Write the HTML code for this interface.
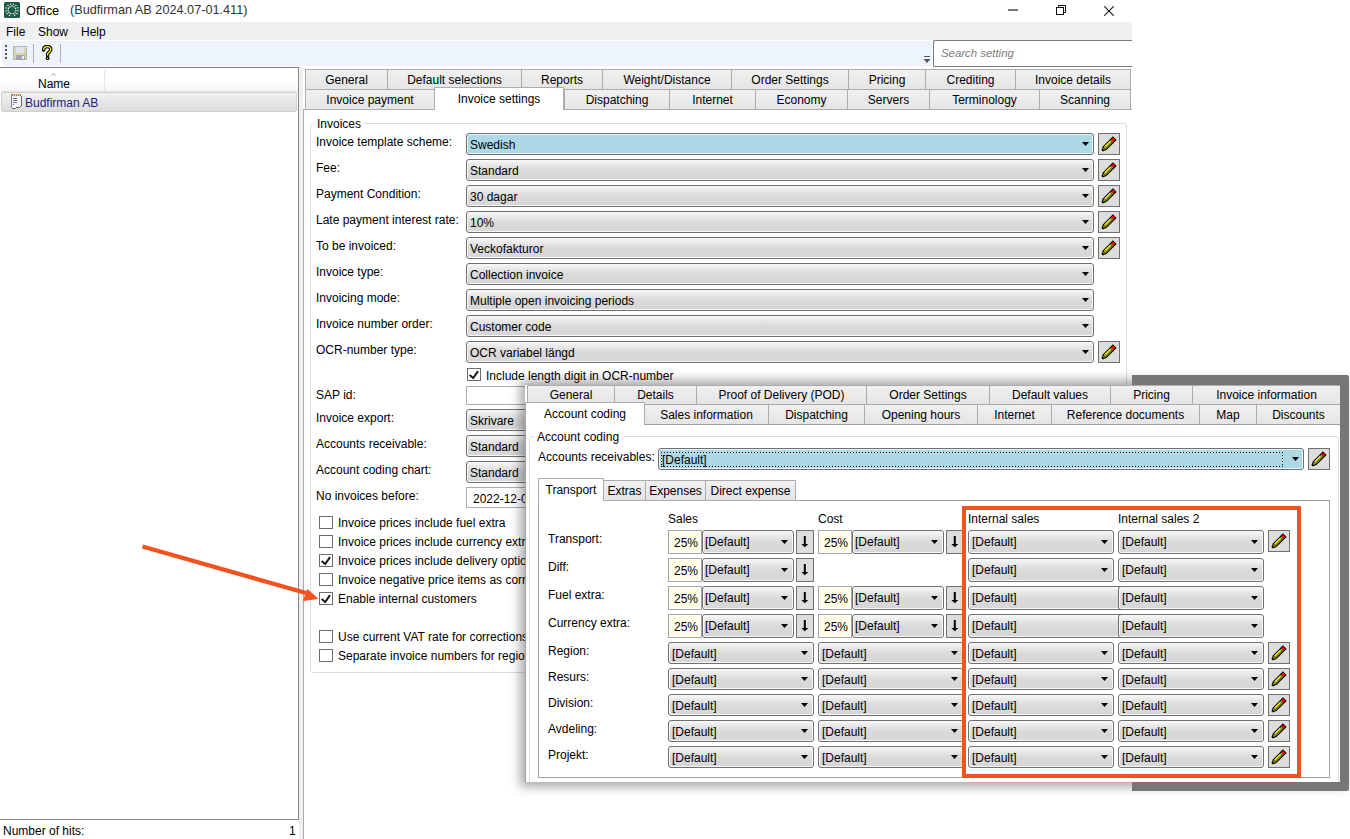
<!DOCTYPE html>
<html><head><meta charset="utf-8"><style>
*{margin:0;padding:0;box-sizing:border-box}
html,body{width:1350px;height:839px;overflow:hidden;background:#fff}
body{position:relative;font-family:"Liberation Sans",sans-serif;font-size:12px;color:#000}
div,svg{position:absolute}
.t{white-space:nowrap;line-height:15px;font-size:12px}
.cb{border:1px solid #707070;border-radius:3px;background:linear-gradient(#f8f8f8,#e4e4e4 30%,#d9d9d9 55%,#d7d7d7);box-shadow:inset 0 0 0 1px #f7f7f7}
.cb.blue{background:#add8e6;box-shadow:inset 0 0 0 1px #e8f4f8}
.pb{border:1px solid #707070;background:#dddddd}
.pct{border:1px solid #a5a5a5;background:#fffde6;box-shadow:inset 0 0 0 1px #fff}
.ck{width:14px;height:13px;border:1px solid #6d6d6d;background:#fff}
.tab{border:1px solid #acacac;background:linear-gradient(#f0f0f0,#e5e5e5)}
.tab.sel{background:#fff;border-bottom:none}
.gb{border:1px solid #d5dfe5;border-radius:3px}
</style></head>
<body>
<svg style="left:4px;top:2px" width="16" height="16" viewBox="0 0 16 16"><path d="M1 0H15L16 1V15L15 16H1L0 15V1Z" fill="#1f5c48"/><ellipse cx="6.67" cy="11.66" rx="1.0" ry="0.55" transform="rotate(170 6.67 11.66)" fill="#f2f6f2"/><ellipse cx="4.93" cy="10.40" rx="1.0" ry="0.55" transform="rotate(202 4.93 10.40)" fill="#f2f6f2"/><ellipse cx="4.12" cy="8.41" rx="1.0" ry="0.55" transform="rotate(234 4.12 8.41)" fill="#f2f6f2"/><ellipse cx="4.49" cy="6.29" rx="1.0" ry="0.55" transform="rotate(266 4.49 6.29)" fill="#f2f6f2"/><ellipse cx="5.93" cy="4.69" rx="1.0" ry="0.55" transform="rotate(298 5.93 4.69)" fill="#f2f6f2"/><ellipse cx="8.00" cy="4.10" rx="1.0" ry="0.55" transform="rotate(330 8.00 4.10)" fill="#f2f6f2"/><ellipse cx="10.07" cy="4.69" rx="1.0" ry="0.55" transform="rotate(362 10.07 4.69)" fill="#f2f6f2"/><ellipse cx="11.51" cy="6.29" rx="1.0" ry="0.55" transform="rotate(394 11.51 6.29)" fill="#f2f6f2"/><ellipse cx="11.88" cy="8.41" rx="1.0" ry="0.55" transform="rotate(426 11.88 8.41)" fill="#f2f6f2"/><ellipse cx="11.07" cy="10.40" rx="1.0" ry="0.55" transform="rotate(458 11.07 10.40)" fill="#f2f6f2"/><ellipse cx="9.33" cy="11.66" rx="1.0" ry="0.55" transform="rotate(490 9.33 11.66)" fill="#f2f6f2"/><circle cx="5.46" cy="13.44" r="0.75" fill="#e8f0ea"/><circle cx="3.21" cy="11.61" r="0.75" fill="#e8f0ea"/><circle cx="2.07" cy="8.94" r="0.75" fill="#e8f0ea"/><circle cx="2.33" cy="6.05" r="0.75" fill="#e8f0ea"/><circle cx="3.91" cy="3.61" r="0.75" fill="#e8f0ea"/><circle cx="6.45" cy="2.20" r="0.75" fill="#e8f0ea"/><circle cx="9.35" cy="2.15" r="0.75" fill="#e8f0ea"/><circle cx="11.94" cy="3.47" r="0.75" fill="#e8f0ea"/><circle cx="13.60" cy="5.85" r="0.75" fill="#e8f0ea"/><circle cx="13.96" cy="8.73" r="0.75" fill="#e8f0ea"/><circle cx="12.91" cy="11.44" r="0.75" fill="#e8f0ea"/><circle cx="10.72" cy="13.35" r="0.75" fill="#e8f0ea"/></svg>
<div class="t" style="left:26px;top:3px;font-size:12.8px">Office</div>
<div class="t" style="left:70px;top:3px;color:#333;font-size:12.7px">(Budfirman AB 2024.07-01.411)</div>
<div style="left:1008px;top:9px;width:10px;height:2px;background:#777"></div>
<svg style="left:1055px;top:4px" width="12" height="12"><rect x="1.5" y="3.5" width="7" height="7" fill="none" stroke="#111"/><path d="M3.5 3.5V1.5H10.5V8.5H8.5" fill="none" stroke="#111"/></svg>
<svg style="left:1104px;top:6px" width="10" height="10"><path d="M0.3 0.3L9.7 9.7M9.7 0.3L0.3 9.7" stroke="#111" stroke-width="1.05"/></svg>
<div style="left:0px;top:22px;width:1132px;height:18px;background:#f0f0f0"></div>
<div class="t" style="left:6px;top:25px;">File</div>
<div class="t" style="left:38px;top:25px;">Show</div>
<div class="t" style="left:81px;top:25px;">Help</div>
<div style="left:0px;top:40px;width:1132px;height:27px;background:#fff"></div>
<div style="left:2px;top:41px;width:930px;height:25px;background:#eef4fc;border-radius:3px"></div>
<div style="left:5px;top:45px;width:2px;height:2px;background:#555"></div>
<div style="left:5px;top:49px;width:2px;height:2px;background:#555"></div>
<div style="left:5px;top:53px;width:2px;height:2px;background:#555"></div>
<div style="left:5px;top:57px;width:2px;height:2px;background:#555"></div>
<svg style="left:13px;top:46px" width="14" height="14" viewBox="0 0 14 14"><rect x="0" y="0" width="14" height="14" fill="#b4b4b4"/><rect x="1" y="1" width="12" height="12" fill="#d6d6a8"/><rect x="3" y="1" width="8" height="6" fill="#e2e5ec"/><rect x="3" y="9" width="9" height="5" fill="#a4a6ae"/><rect x="9" y="10" width="2" height="3" fill="#eef0f4"/><rect x="12" y="1" width="1" height="1" fill="#fff"/></svg>
<div style="left:33px;top:44px;width:1px;height:19px;background:#b0b0b0"></div>
<svg style="left:41px;top:45px" width="13" height="16" viewBox="0 0 13 16"><path d="M2.6 5 C2.6 2.6 4.2 1.6 6.3 1.6 C8.6 1.6 9.8 2.9 9.8 4.6 C9.8 6.6 7.4 7.2 6.6 8.8 L6.6 10.4" fill="none" stroke="#000" stroke-width="3.4" stroke-linecap="round"/><circle cx="6.6" cy="13.2" r="1.9" fill="#000"/><path d="M2.6 5 C2.6 2.6 4.2 1.6 6.3 1.6 C8.6 1.6 9.8 2.9 9.8 4.6 C9.8 6.6 7.4 7.2 6.6 8.8 L6.6 10.4" fill="none" stroke="#ff0" stroke-width="1.3"/><circle cx="6.6" cy="13.2" r="0.8" fill="#ff0"/></svg>
<div style="left:60px;top:44px;width:1px;height:19px;background:#b0b0b0"></div>
<svg style="left:923px;top:56px" width="8" height="8"><rect x="1" y="0" width="6" height="1" fill="#555"/><path d="M0.5 3H7.5L4 7Z" fill="#555"/></svg>
<div style="left:933px;top:40px;width:199px;height:27px;background:#fff;border:1px solid #7a7a7a;border-right:none;border-radius:2px 0 0 2px"></div>
<div class="t" style="left:941px;top:46px;font-style:italic;color:#7d7d7d;font-size:11.4px">Search setting</div>
<div style="left:0px;top:67px;width:299px;height:753px;background:#fff;border-top:1px solid #7a7a7a;border-right:1px solid #828790;border-bottom:1px solid #828790"></div>
<div style="left:1px;top:68px;width:297px;height:23px;background:linear-gradient(#fff,#fff 50%,#f4f5f7)"></div>
<div style="left:104px;top:70px;width:1px;height:21px;background:#e5e5e5"></div>
<div style="left:1px;top:91px;width:297px;height:1px;background:#e2e2e2"></div>
<div class="t" style="left:38px;top:77px;">Name</div>
<svg style="left:51px;top:73px" width="5" height="3"><path d="M0.5 2.5L2.5 0.5L4.5 2.5" stroke="#999" fill="none"/></svg>
<div style="left:1px;top:92px;width:296px;height:20px;background:linear-gradient(#f1f1f1,#dcdcdc);border:1px solid #d0d0d0;border-radius:2px"></div>
<svg style="left:10px;top:93px" width="13" height="17" viewBox="0 0 13 17" shape-rendering="crispEdges"><rect x="1" y="2" width="10" height="13" fill="#f3f5f8"/><rect x="1" y="2" width="1" height="13" fill="#7a78c8"/><rect x="11" y="3" width="1" height="10" fill="#6a6a6a"/><rect x="10" y="13" width="1" height="1" fill="#6a6a6a"/><rect x="6" y="14" width="4" height="1" fill="#6a6a6a"/><rect x="2" y="15" width="4" height="1" fill="#6a6a6a"/><rect x="1" y="1" width="10" height="1" fill="#c8a848"/><rect x="2" y="2" width="1" height="1" fill="#8a6a30"/><rect x="4" y="2" width="1" height="1" fill="#8a6a30"/><rect x="6" y="2" width="1" height="1" fill="#8a6a30"/><rect x="8" y="2" width="1" height="1" fill="#8a6a30"/><rect x="10" y="2" width="1" height="1" fill="#8a6a30"/><rect x="3" y="5" width="4" height="1" fill="#707880"/><rect x="3" y="7" width="4" height="1" fill="#707880"/><rect x="3" y="9" width="4" height="1" fill="#707880"/><rect x="3" y="11" width="1" height="1" fill="#707880"/></svg>
<div class="t" style="left:25px;top:96px;color:#1a237e">Budfirman AB</div>
<div class="t" style="left:3px;top:824px;">Number of hits:</div>
<div class="t" style="left:289px;top:824px;">1</div>
<div style="left:299px;top:67px;width:4px;height:772px;background:#f0f0f0"></div>
<div style="left:303px;top:109px;width:829px;height:740px;background:#fff;border-left:1px solid #acacac"></div>
<div class="tab" style="left:305px;top:69px;width:83px;height:21px;"><div class="t" style="left:0;width:100%;text-align:center;top:3px">General</div></div>
<div class="tab" style="left:387px;top:69px;width:135px;height:21px;"><div class="t" style="left:0;width:100%;text-align:center;top:3px">Default selections</div></div>
<div class="tab" style="left:521px;top:69px;width:82px;height:21px;"><div class="t" style="left:0;width:100%;text-align:center;top:3px">Reports</div></div>
<div class="tab" style="left:602px;top:69px;width:130px;height:21px;"><div class="t" style="left:0;width:100%;text-align:center;top:3px">Weight/Distance</div></div>
<div class="tab" style="left:731px;top:69px;width:118px;height:21px;"><div class="t" style="left:0;width:100%;text-align:center;top:3px">Order Settings</div></div>
<div class="tab" style="left:848px;top:69px;width:78px;height:21px;"><div class="t" style="left:0;width:100%;text-align:center;top:3px">Pricing</div></div>
<div class="tab" style="left:925px;top:69px;width:91px;height:21px;"><div class="t" style="left:0;width:100%;text-align:center;top:3px">Crediting</div></div>
<div class="tab" style="left:1015px;top:69px;width:116px;height:21px;"><div class="t" style="left:0;width:100%;text-align:center;top:3px">Invoice details</div></div>
<div class="tab" style="left:305px;top:89px;width:130px;height:21px;"><div class="t" style="left:0;width:100%;text-align:center;top:3px">Invoice payment</div></div>
<div class="tab" style="left:564px;top:89px;width:106px;height:21px;"><div class="t" style="left:0;width:100%;text-align:center;top:3px">Dispatching</div></div>
<div class="tab" style="left:669px;top:89px;width:87px;height:21px;"><div class="t" style="left:0;width:100%;text-align:center;top:3px">Internet</div></div>
<div class="tab" style="left:755px;top:89px;width:93px;height:21px;"><div class="t" style="left:0;width:100%;text-align:center;top:3px">Economy</div></div>
<div class="tab" style="left:847px;top:89px;width:83px;height:21px;"><div class="t" style="left:0;width:100%;text-align:center;top:3px">Servers</div></div>
<div class="tab" style="left:929px;top:89px;width:111px;height:21px;"><div class="t" style="left:0;width:100%;text-align:center;top:3px">Terminology</div></div>
<div class="tab" style="left:1039px;top:89px;width:92px;height:21px;"><div class="t" style="left:0;width:100%;text-align:center;top:3px">Scanning</div></div>
<div style="left:303px;top:109px;width:829px;height:1px;background:#acacac"></div>
<div class="tab sel" style="left:434px;top:87px;width:130px;height:23px;"><div class="t" style="left:0;width:100%;text-align:center;top:4px">Invoice settings</div></div>
<div class="gb" style="left:310px;top:123px;width:817px;height:550px"></div>
<div style="left:314px;top:118px;width:50px;height:10px;background:#fff"></div>
<div class="t" style="left:317px;top:117px;">Invoices</div>
<div class="t" style="left:316px;top:135px;">Invoice template scheme:</div>
<div class="cb blue" style="left:466px;top:133px;width:628px;height:22px"><div class="t" style="left:3px;top:4px">Swedish</div><svg style="position:absolute;left:615px;top:8px" width="7" height="4" viewBox="0 0 7 4"><path d="M0 0H7L3.5 4Z" fill="#000"/></svg></div>
<div class="pb" style="left:1098px;top:133px;width:22px;height:22px"><svg width="22" height="22" viewBox="0 0 22 22" style="position:absolute;left:-1px;top:-1px">
<g transform="translate(-0.3 0.2) rotate(-45 11 11)">
<path d="M1.8 10.0 L5.6 8.4 L19.6 8.4 L19.6 13.6 L5.6 13.6 L1.8 12.0 Z" fill="#000"/>
<path d="M3.2 10.5 L6.2 9.4 L6.2 12.6 L3.2 11.5 Z" fill="#8c8c00"/>
<rect x="6.2" y="9.4" width="8.4" height="1.4" fill="#ffff00"/>
<rect x="6.2" y="10.8" width="8.4" height="0.7" fill="#b8b8c8"/>
<rect x="6.2" y="11.5" width="8.4" height="1.1" fill="#8c8c00"/>
<rect x="14.6" y="9.4" width="1.8" height="3.2" fill="#8c8c00"/>
<rect x="16.4" y="9.4" width="2.4" height="3.2" fill="#ff0000"/>
</g></svg></div>
<div class="t" style="left:316px;top:161px;">Fee:</div>
<div class="cb" style="left:466px;top:159px;width:628px;height:22px"><div class="t" style="left:3px;top:4px">Standard</div><svg style="position:absolute;left:615px;top:8px" width="7" height="4" viewBox="0 0 7 4"><path d="M0 0H7L3.5 4Z" fill="#000"/></svg></div>
<div class="pb" style="left:1098px;top:159px;width:22px;height:22px"><svg width="22" height="22" viewBox="0 0 22 22" style="position:absolute;left:-1px;top:-1px">
<g transform="translate(-0.3 0.2) rotate(-45 11 11)">
<path d="M1.8 10.0 L5.6 8.4 L19.6 8.4 L19.6 13.6 L5.6 13.6 L1.8 12.0 Z" fill="#000"/>
<path d="M3.2 10.5 L6.2 9.4 L6.2 12.6 L3.2 11.5 Z" fill="#8c8c00"/>
<rect x="6.2" y="9.4" width="8.4" height="1.4" fill="#ffff00"/>
<rect x="6.2" y="10.8" width="8.4" height="0.7" fill="#b8b8c8"/>
<rect x="6.2" y="11.5" width="8.4" height="1.1" fill="#8c8c00"/>
<rect x="14.6" y="9.4" width="1.8" height="3.2" fill="#8c8c00"/>
<rect x="16.4" y="9.4" width="2.4" height="3.2" fill="#ff0000"/>
</g></svg></div>
<div class="t" style="left:316px;top:187px;">Payment Condition:</div>
<div class="cb" style="left:466px;top:185px;width:628px;height:22px"><div class="t" style="left:3px;top:4px">30 dagar</div><svg style="position:absolute;left:615px;top:8px" width="7" height="4" viewBox="0 0 7 4"><path d="M0 0H7L3.5 4Z" fill="#000"/></svg></div>
<div class="pb" style="left:1098px;top:185px;width:22px;height:22px"><svg width="22" height="22" viewBox="0 0 22 22" style="position:absolute;left:-1px;top:-1px">
<g transform="translate(-0.3 0.2) rotate(-45 11 11)">
<path d="M1.8 10.0 L5.6 8.4 L19.6 8.4 L19.6 13.6 L5.6 13.6 L1.8 12.0 Z" fill="#000"/>
<path d="M3.2 10.5 L6.2 9.4 L6.2 12.6 L3.2 11.5 Z" fill="#8c8c00"/>
<rect x="6.2" y="9.4" width="8.4" height="1.4" fill="#ffff00"/>
<rect x="6.2" y="10.8" width="8.4" height="0.7" fill="#b8b8c8"/>
<rect x="6.2" y="11.5" width="8.4" height="1.1" fill="#8c8c00"/>
<rect x="14.6" y="9.4" width="1.8" height="3.2" fill="#8c8c00"/>
<rect x="16.4" y="9.4" width="2.4" height="3.2" fill="#ff0000"/>
</g></svg></div>
<div class="t" style="left:316px;top:213px;">Late payment interest rate:</div>
<div class="cb" style="left:466px;top:211px;width:628px;height:22px"><div class="t" style="left:3px;top:4px">10%</div><svg style="position:absolute;left:615px;top:8px" width="7" height="4" viewBox="0 0 7 4"><path d="M0 0H7L3.5 4Z" fill="#000"/></svg></div>
<div class="pb" style="left:1098px;top:211px;width:22px;height:22px"><svg width="22" height="22" viewBox="0 0 22 22" style="position:absolute;left:-1px;top:-1px">
<g transform="translate(-0.3 0.2) rotate(-45 11 11)">
<path d="M1.8 10.0 L5.6 8.4 L19.6 8.4 L19.6 13.6 L5.6 13.6 L1.8 12.0 Z" fill="#000"/>
<path d="M3.2 10.5 L6.2 9.4 L6.2 12.6 L3.2 11.5 Z" fill="#8c8c00"/>
<rect x="6.2" y="9.4" width="8.4" height="1.4" fill="#ffff00"/>
<rect x="6.2" y="10.8" width="8.4" height="0.7" fill="#b8b8c8"/>
<rect x="6.2" y="11.5" width="8.4" height="1.1" fill="#8c8c00"/>
<rect x="14.6" y="9.4" width="1.8" height="3.2" fill="#8c8c00"/>
<rect x="16.4" y="9.4" width="2.4" height="3.2" fill="#ff0000"/>
</g></svg></div>
<div class="t" style="left:316px;top:239px;">To be invoiced:</div>
<div class="cb" style="left:466px;top:237px;width:628px;height:22px"><div class="t" style="left:3px;top:4px">Veckofakturor</div><svg style="position:absolute;left:615px;top:8px" width="7" height="4" viewBox="0 0 7 4"><path d="M0 0H7L3.5 4Z" fill="#000"/></svg></div>
<div class="pb" style="left:1098px;top:237px;width:22px;height:22px"><svg width="22" height="22" viewBox="0 0 22 22" style="position:absolute;left:-1px;top:-1px">
<g transform="translate(-0.3 0.2) rotate(-45 11 11)">
<path d="M1.8 10.0 L5.6 8.4 L19.6 8.4 L19.6 13.6 L5.6 13.6 L1.8 12.0 Z" fill="#000"/>
<path d="M3.2 10.5 L6.2 9.4 L6.2 12.6 L3.2 11.5 Z" fill="#8c8c00"/>
<rect x="6.2" y="9.4" width="8.4" height="1.4" fill="#ffff00"/>
<rect x="6.2" y="10.8" width="8.4" height="0.7" fill="#b8b8c8"/>
<rect x="6.2" y="11.5" width="8.4" height="1.1" fill="#8c8c00"/>
<rect x="14.6" y="9.4" width="1.8" height="3.2" fill="#8c8c00"/>
<rect x="16.4" y="9.4" width="2.4" height="3.2" fill="#ff0000"/>
</g></svg></div>
<div class="t" style="left:316px;top:265px;">Invoice type:</div>
<div class="cb" style="left:466px;top:263px;width:628px;height:22px"><div class="t" style="left:3px;top:4px">Collection invoice</div><svg style="position:absolute;left:615px;top:8px" width="7" height="4" viewBox="0 0 7 4"><path d="M0 0H7L3.5 4Z" fill="#000"/></svg></div>
<div class="t" style="left:316px;top:291px;">Invoicing mode:</div>
<div class="cb" style="left:466px;top:289px;width:628px;height:22px"><div class="t" style="left:3px;top:4px">Multiple open invoicing periods</div><svg style="position:absolute;left:615px;top:8px" width="7" height="4" viewBox="0 0 7 4"><path d="M0 0H7L3.5 4Z" fill="#000"/></svg></div>
<div class="t" style="left:316px;top:317px;">Invoice number order:</div>
<div class="cb" style="left:466px;top:315px;width:628px;height:22px"><div class="t" style="left:3px;top:4px">Customer code</div><svg style="position:absolute;left:615px;top:8px" width="7" height="4" viewBox="0 0 7 4"><path d="M0 0H7L3.5 4Z" fill="#000"/></svg></div>
<div class="t" style="left:316px;top:343px;">OCR-number type:</div>
<div class="cb" style="left:466px;top:341px;width:628px;height:22px"><div class="t" style="left:3px;top:4px">OCR variabel längd</div><svg style="position:absolute;left:615px;top:8px" width="7" height="4" viewBox="0 0 7 4"><path d="M0 0H7L3.5 4Z" fill="#000"/></svg></div>
<div class="pb" style="left:1098px;top:341px;width:22px;height:22px"><svg width="22" height="22" viewBox="0 0 22 22" style="position:absolute;left:-1px;top:-1px">
<g transform="translate(-0.3 0.2) rotate(-45 11 11)">
<path d="M1.8 10.0 L5.6 8.4 L19.6 8.4 L19.6 13.6 L5.6 13.6 L1.8 12.0 Z" fill="#000"/>
<path d="M3.2 10.5 L6.2 9.4 L6.2 12.6 L3.2 11.5 Z" fill="#8c8c00"/>
<rect x="6.2" y="9.4" width="8.4" height="1.4" fill="#ffff00"/>
<rect x="6.2" y="10.8" width="8.4" height="0.7" fill="#b8b8c8"/>
<rect x="6.2" y="11.5" width="8.4" height="1.1" fill="#8c8c00"/>
<rect x="14.6" y="9.4" width="1.8" height="3.2" fill="#8c8c00"/>
<rect x="16.4" y="9.4" width="2.4" height="3.2" fill="#ff0000"/>
</g></svg></div>
<div class="ck" style="left:467px;top:368px"><svg width="13" height="13" style="position:absolute;left:-1px;top:-1px"><path d="M2.6 6.9 L6.2 10 L11 3.1" stroke="#1a1a1a" stroke-width="2" fill="none" stroke-linejoin="miter"/></svg></div>
<div class="t" style="left:486px;top:369px;">Include length digit in OCR-number</div>
<div class="t" style="left:316px;top:388px;">SAP id:</div>
<div class="t" style="left:316px;top:411px;">Invoice export:</div>
<div class="t" style="left:316px;top:437px;">Accounts receivable:</div>
<div class="t" style="left:316px;top:463px;">Account coding chart:</div>
<div class="t" style="left:316px;top:489px;">No invoices before:</div>
<div style="left:466px;top:386px;width:100px;height:19px;background:#fff;border:1px solid #abadb3"></div>
<div class="cb" style="left:466px;top:409px;width:628px;height:22px"><div class="t" style="left:3px;top:4px">Skrivare</div><svg style="position:absolute;left:615px;top:8px" width="7" height="4" viewBox="0 0 7 4"><path d="M0 0H7L3.5 4Z" fill="#000"/></svg></div>
<div class="cb" style="left:466px;top:435px;width:628px;height:22px"><div class="t" style="left:3px;top:4px">Standard</div><svg style="position:absolute;left:615px;top:8px" width="7" height="4" viewBox="0 0 7 4"><path d="M0 0H7L3.5 4Z" fill="#000"/></svg></div>
<div class="cb" style="left:466px;top:461px;width:628px;height:22px"><div class="t" style="left:3px;top:4px">Standard</div><svg style="position:absolute;left:615px;top:8px" width="7" height="4" viewBox="0 0 7 4"><path d="M0 0H7L3.5 4Z" fill="#000"/></svg></div>
<div style="left:466px;top:487px;width:100px;height:21px;background:#fff;border:1px solid #abadb3"></div>
<div class="t" style="left:473px;top:492px;">2022-12-01</div>
<div class="ck" style="left:319px;top:516px"></div>
<div class="t" style="left:338px;top:516px;">Invoice prices include fuel extra</div>
<div class="ck" style="left:319px;top:535px"></div>
<div class="t" style="left:338px;top:535px;">Invoice prices include currency extra</div>
<div class="ck" style="left:319px;top:554px"><svg width="13" height="13" style="position:absolute;left:-1px;top:-1px"><path d="M2.6 6.9 L6.2 10 L11 3.1" stroke="#1a1a1a" stroke-width="2" fill="none" stroke-linejoin="miter"/></svg></div>
<div class="t" style="left:338px;top:554px;">Invoice prices include delivery options</div>
<div class="ck" style="left:319px;top:573px"></div>
<div class="t" style="left:338px;top:573px;">Invoice negative price items as corrections</div>
<div class="ck" style="left:319px;top:592px"><svg width="13" height="13" style="position:absolute;left:-1px;top:-1px"><path d="M2.6 6.9 L6.2 10 L11 3.1" stroke="#1a1a1a" stroke-width="2" fill="none" stroke-linejoin="miter"/></svg></div>
<div class="t" style="left:338px;top:592px;">Enable internal customers</div>
<div class="ck" style="left:319px;top:630px"></div>
<div class="t" style="left:338px;top:630px;">Use current VAT rate for corrections</div>
<div class="ck" style="left:319px;top:649px"></div>
<div class="t" style="left:338px;top:649px;">Separate invoice numbers for regions</div>
<svg style="left:130px;top:530px" width="200" height="80" viewBox="130 530 200 80"><path d="M142.5 546.5 L306 593" stroke="#f4511e" stroke-width="4.4"/><path d="M317.5 598.5 L303.5 600.5 L307.5 589.5 Z" fill="#f4511e" stroke="#f4511e" stroke-width="1"/></svg>
<div style="left:525px;top:385px;width:815px;height:397px;box-shadow:0 0 10px 5px rgba(0,0,0,0.33)"></div>
<div style="left:1132px;top:375px;width:217px;height:416px;background:#777;border-radius:0 2px 2px 0"></div>
<div style="left:0;top:0;width:1350px;height:839px;clip-path:inset(385px 10px 57px 525px)">
<div style="left:525px;top:385px;width:815px;height:397px;background:#fff"></div>
<div style="left:525px;top:424px;width:1px;height:358px;background:#a0a0a0"></div>
<div class="tab" style="left:527px;top:385px;width:88px;height:20px;"><div class="t" style="left:0;width:100%;text-align:center;top:2px">General</div></div>
<div class="tab" style="left:614px;top:385px;width:83px;height:20px;"><div class="t" style="left:0;width:100%;text-align:center;top:2px">Details</div></div>
<div class="tab" style="left:696px;top:385px;width:171px;height:20px;"><div class="t" style="left:0;width:100%;text-align:center;top:2px">Proof of Delivery (POD)</div></div>
<div class="tab" style="left:866px;top:385px;width:124px;height:20px;"><div class="t" style="left:0;width:100%;text-align:center;top:2px">Order Settings</div></div>
<div class="tab" style="left:989px;top:385px;width:122px;height:20px;"><div class="t" style="left:0;width:100%;text-align:center;top:2px">Default values</div></div>
<div class="tab" style="left:1110px;top:385px;width:83px;height:20px;"><div class="t" style="left:0;width:100%;text-align:center;top:2px">Pricing</div></div>
<div class="tab" style="left:1192px;top:385px;width:149px;height:20px;"><div class="t" style="left:0;width:100%;text-align:center;top:2px">Invoice information</div></div>
<div class="tab" style="left:644px;top:404px;width:125px;height:21px;"><div class="t" style="left:0;width:100%;text-align:center;top:3px">Sales information</div></div>
<div class="tab" style="left:768px;top:404px;width:97px;height:21px;"><div class="t" style="left:0;width:100%;text-align:center;top:3px">Dispatching</div></div>
<div class="tab" style="left:864px;top:404px;width:114px;height:21px;"><div class="t" style="left:0;width:100%;text-align:center;top:3px">Opening hours</div></div>
<div class="tab" style="left:977px;top:404px;width:75px;height:21px;"><div class="t" style="left:0;width:100%;text-align:center;top:3px">Internet</div></div>
<div class="tab" style="left:1051px;top:404px;width:149px;height:21px;"><div class="t" style="left:0;width:100%;text-align:center;top:3px">Reference documents</div></div>
<div class="tab" style="left:1199px;top:404px;width:58px;height:21px;"><div class="t" style="left:0;width:100%;text-align:center;top:3px">Map</div></div>
<div class="tab" style="left:1256px;top:404px;width:85px;height:21px;"><div class="t" style="left:0;width:100%;text-align:center;top:3px">Discounts</div></div>
<div style="left:525px;top:424px;width:815px;height:1px;background:#a0a0a0"></div>
<div class="tab sel" style="left:525px;top:402px;width:120px;height:23px;"><div class="t" style="left:0;width:100%;text-align:center;top:4px">Account coding</div></div>
<div class="gb" style="left:529px;top:436px;width:810px;height:400px"></div>
<div style="left:534px;top:431px;width:90px;height:10px;background:#fff"></div>
<div class="t" style="left:537px;top:430px;">Account coding</div>
<div class="t" style="left:538px;top:450px;">Accounts receivables:</div>
<div class="cb blue" style="left:658px;top:448px;width:646px;height:22px"><div class="t" style="left:3px;top:4px">[Default]</div><div style="left:2px;top:3px;width:622px;height:1px;background:repeating-linear-gradient(90deg,#111 0 1px,transparent 1px 3px)"></div><div style="left:2px;top:17px;width:622px;height:1px;background:repeating-linear-gradient(90deg,#111 0 1px,transparent 1px 3px)"></div><div style="left:623px;top:3px;width:1px;height:15px;background:repeating-linear-gradient(180deg,#111 0 1px,transparent 1px 3px)"></div><div style="left:2px;top:3px;width:1px;height:15px;background:repeating-linear-gradient(180deg,#111 0 1px,transparent 1px 3px)"></div><svg style="position:absolute;left:633px;top:8px" width="7" height="4" viewBox="0 0 7 4"><path d="M0 0H7L3.5 4Z" fill="#000"/></svg></div>
<div class="pb" style="left:1308px;top:448px;width:22px;height:22px"><svg width="22" height="22" viewBox="0 0 22 22" style="position:absolute;left:-1px;top:-1px">
<g transform="translate(-0.3 0.2) rotate(-45 11 11)">
<path d="M1.8 10.0 L5.6 8.4 L19.6 8.4 L19.6 13.6 L5.6 13.6 L1.8 12.0 Z" fill="#000"/>
<path d="M3.2 10.5 L6.2 9.4 L6.2 12.6 L3.2 11.5 Z" fill="#8c8c00"/>
<rect x="6.2" y="9.4" width="8.4" height="1.4" fill="#ffff00"/>
<rect x="6.2" y="10.8" width="8.4" height="0.7" fill="#b8b8c8"/>
<rect x="6.2" y="11.5" width="8.4" height="1.1" fill="#8c8c00"/>
<rect x="14.6" y="9.4" width="1.8" height="3.2" fill="#8c8c00"/>
<rect x="16.4" y="9.4" width="2.4" height="3.2" fill="#ff0000"/>
</g></svg></div>
<div style="left:538px;top:500px;width:792px;height:278px;background:#fff;border:1px solid #a0a0a0"></div>
<div class="tab" style="left:603px;top:480px;width:43px;height:21px;"><div class="t" style="left:0;width:100%;text-align:center;top:3px">Extras</div></div>
<div class="tab" style="left:645px;top:480px;width:61px;height:21px;"><div class="t" style="left:0;width:100%;text-align:center;top:3px">Expenses</div></div>
<div class="tab" style="left:705px;top:480px;width:91px;height:21px;"><div class="t" style="left:0;width:100%;text-align:center;top:3px">Direct expense</div></div>
<div class="tab sel" style="left:538px;top:478px;width:66px;height:23px;"><div class="t" style="left:0;width:100%;text-align:center;top:4px">Transport</div></div>
<div class="t" style="left:668px;top:512px;">Sales</div>
<div class="t" style="left:818px;top:512px;">Cost</div>
<div class="t" style="left:968px;top:512px;">Internal sales</div>
<div class="t" style="left:1118px;top:512px;">Internal sales 2</div>
<div class="t" style="left:548px;top:532px;">Transport:</div>
<div class="pct" style="left:668px;top:530px;width:34px;height:24px"><div class="t" style="right:3px;top:5px">25%</div></div>
<div class="cb" style="left:702px;top:530px;width:92px;height:24px"><div class="t" style="left:2px;top:4px">[Default]</div><svg style="position:absolute;left:78px;top:9px" width="7" height="4" viewBox="0 0 7 4"><path d="M0 0H7L3.5 4Z" fill="#000"/></svg></div>
<div class="pb" style="left:796px;top:530px;width:18px;height:24px"><svg width="18" height="24" style="position:absolute;left:-1px;top:-1px"><rect x="7.8" y="6" width="2" height="9" fill="#000"/><path d="M5.3 14H12.3L8.8 17.2Z" fill="#000"/></svg></div>
<div class="pct" style="left:818px;top:530px;width:34px;height:24px"><div class="t" style="right:3px;top:5px">25%</div></div>
<div class="cb" style="left:852px;top:530px;width:92px;height:24px"><div class="t" style="left:2px;top:4px">[Default]</div><svg style="position:absolute;left:78px;top:9px" width="7" height="4" viewBox="0 0 7 4"><path d="M0 0H7L3.5 4Z" fill="#000"/></svg></div>
<div class="pb" style="left:946px;top:530px;width:18px;height:24px"><svg width="18" height="24" style="position:absolute;left:-1px;top:-1px"><rect x="7.8" y="6" width="2" height="9" fill="#000"/><path d="M5.3 14H12.3L8.8 17.2Z" fill="#000"/></svg></div>
<div class="cb" style="left:968px;top:530px;width:146px;height:24px"><div class="t" style="left:3px;top:4px">[Default]</div><svg style="position:absolute;left:132px;top:9px" width="7" height="4" viewBox="0 0 7 4"><path d="M0 0H7L3.5 4Z" fill="#000"/></svg></div>
<div class="cb" style="left:1118px;top:530px;width:146px;height:24px"><div class="t" style="left:3px;top:4px">[Default]</div><svg style="position:absolute;left:132px;top:9px" width="7" height="4" viewBox="0 0 7 4"><path d="M0 0H7L3.5 4Z" fill="#000"/></svg></div>
<div class="pb" style="left:1268px;top:530px;width:22px;height:22px"><svg width="22" height="22" viewBox="0 0 22 22" style="position:absolute;left:-1px;top:-1px">
<g transform="translate(-0.3 0.2) rotate(-45 11 11)">
<path d="M1.8 10.0 L5.6 8.4 L19.6 8.4 L19.6 13.6 L5.6 13.6 L1.8 12.0 Z" fill="#000"/>
<path d="M3.2 10.5 L6.2 9.4 L6.2 12.6 L3.2 11.5 Z" fill="#8c8c00"/>
<rect x="6.2" y="9.4" width="8.4" height="1.4" fill="#ffff00"/>
<rect x="6.2" y="10.8" width="8.4" height="0.7" fill="#b8b8c8"/>
<rect x="6.2" y="11.5" width="8.4" height="1.1" fill="#8c8c00"/>
<rect x="14.6" y="9.4" width="1.8" height="3.2" fill="#8c8c00"/>
<rect x="16.4" y="9.4" width="2.4" height="3.2" fill="#ff0000"/>
</g></svg></div>
<div class="t" style="left:548px;top:560px;">Diff:</div>
<div class="pct" style="left:668px;top:558px;width:34px;height:24px"><div class="t" style="right:3px;top:5px">25%</div></div>
<div class="cb" style="left:702px;top:558px;width:92px;height:24px"><div class="t" style="left:2px;top:4px">[Default]</div><svg style="position:absolute;left:78px;top:9px" width="7" height="4" viewBox="0 0 7 4"><path d="M0 0H7L3.5 4Z" fill="#000"/></svg></div>
<div class="pb" style="left:796px;top:558px;width:18px;height:24px"><svg width="18" height="24" style="position:absolute;left:-1px;top:-1px"><rect x="7.8" y="6" width="2" height="9" fill="#000"/><path d="M5.3 14H12.3L8.8 17.2Z" fill="#000"/></svg></div>
<div class="cb" style="left:968px;top:558px;width:146px;height:24px"><div class="t" style="left:3px;top:4px">[Default]</div><svg style="position:absolute;left:132px;top:9px" width="7" height="4" viewBox="0 0 7 4"><path d="M0 0H7L3.5 4Z" fill="#000"/></svg></div>
<div class="cb" style="left:1118px;top:558px;width:146px;height:24px"><div class="t" style="left:3px;top:4px">[Default]</div><svg style="position:absolute;left:132px;top:9px" width="7" height="4" viewBox="0 0 7 4"><path d="M0 0H7L3.5 4Z" fill="#000"/></svg></div>
<div class="t" style="left:548px;top:588px;">Fuel extra:</div>
<div class="pct" style="left:668px;top:586px;width:34px;height:24px"><div class="t" style="right:3px;top:5px">25%</div></div>
<div class="cb" style="left:702px;top:586px;width:92px;height:24px"><div class="t" style="left:2px;top:4px">[Default]</div><svg style="position:absolute;left:78px;top:9px" width="7" height="4" viewBox="0 0 7 4"><path d="M0 0H7L3.5 4Z" fill="#000"/></svg></div>
<div class="pb" style="left:796px;top:586px;width:18px;height:24px"><svg width="18" height="24" style="position:absolute;left:-1px;top:-1px"><rect x="7.8" y="6" width="2" height="9" fill="#000"/><path d="M5.3 14H12.3L8.8 17.2Z" fill="#000"/></svg></div>
<div class="pct" style="left:818px;top:586px;width:34px;height:24px"><div class="t" style="right:3px;top:5px">25%</div></div>
<div class="cb" style="left:852px;top:586px;width:92px;height:24px"><div class="t" style="left:2px;top:4px">[Default]</div><svg style="position:absolute;left:78px;top:9px" width="7" height="4" viewBox="0 0 7 4"><path d="M0 0H7L3.5 4Z" fill="#000"/></svg></div>
<div class="pb" style="left:946px;top:586px;width:18px;height:24px"><svg width="18" height="24" style="position:absolute;left:-1px;top:-1px"><rect x="7.8" y="6" width="2" height="9" fill="#000"/><path d="M5.3 14H12.3L8.8 17.2Z" fill="#000"/></svg></div>
<div class="cb" style="left:968px;top:586px;width:170px;height:24px"><div class="t" style="left:3px;top:4px">[Default]</div><svg style="position:absolute;left:156px;top:9px" width="7" height="4" viewBox="0 0 7 4"><path d="M0 0H7L3.5 4Z" fill="#000"/></svg></div>
<div class="cb" style="left:1118px;top:586px;width:146px;height:24px"><div class="t" style="left:3px;top:4px">[Default]</div><svg style="position:absolute;left:132px;top:9px" width="7" height="4" viewBox="0 0 7 4"><path d="M0 0H7L3.5 4Z" fill="#000"/></svg></div>
<div class="t" style="left:548px;top:616px;">Currency extra:</div>
<div class="pct" style="left:668px;top:614px;width:34px;height:24px"><div class="t" style="right:3px;top:5px">25%</div></div>
<div class="cb" style="left:702px;top:614px;width:92px;height:24px"><div class="t" style="left:2px;top:4px">[Default]</div><svg style="position:absolute;left:78px;top:9px" width="7" height="4" viewBox="0 0 7 4"><path d="M0 0H7L3.5 4Z" fill="#000"/></svg></div>
<div class="pb" style="left:796px;top:614px;width:18px;height:24px"><svg width="18" height="24" style="position:absolute;left:-1px;top:-1px"><rect x="7.8" y="6" width="2" height="9" fill="#000"/><path d="M5.3 14H12.3L8.8 17.2Z" fill="#000"/></svg></div>
<div class="pct" style="left:818px;top:614px;width:34px;height:24px"><div class="t" style="right:3px;top:5px">25%</div></div>
<div class="cb" style="left:852px;top:614px;width:92px;height:24px"><div class="t" style="left:2px;top:4px">[Default]</div><svg style="position:absolute;left:78px;top:9px" width="7" height="4" viewBox="0 0 7 4"><path d="M0 0H7L3.5 4Z" fill="#000"/></svg></div>
<div class="pb" style="left:946px;top:614px;width:18px;height:24px"><svg width="18" height="24" style="position:absolute;left:-1px;top:-1px"><rect x="7.8" y="6" width="2" height="9" fill="#000"/><path d="M5.3 14H12.3L8.8 17.2Z" fill="#000"/></svg></div>
<div class="cb" style="left:968px;top:614px;width:170px;height:24px"><div class="t" style="left:3px;top:4px">[Default]</div><svg style="position:absolute;left:156px;top:9px" width="7" height="4" viewBox="0 0 7 4"><path d="M0 0H7L3.5 4Z" fill="#000"/></svg></div>
<div class="cb" style="left:1118px;top:614px;width:146px;height:24px"><div class="t" style="left:3px;top:4px">[Default]</div><svg style="position:absolute;left:132px;top:9px" width="7" height="4" viewBox="0 0 7 4"><path d="M0 0H7L3.5 4Z" fill="#000"/></svg></div>
<div class="t" style="left:548px;top:644px;">Region:</div>
<div class="cb" style="left:668px;top:642px;width:146px;height:22px"><div class="t" style="left:3px;top:4px">[Default]</div><svg style="position:absolute;left:132px;top:8px" width="7" height="4" viewBox="0 0 7 4"><path d="M0 0H7L3.5 4Z" fill="#000"/></svg></div>
<div class="cb" style="left:818px;top:642px;width:146px;height:22px"><div class="t" style="left:3px;top:4px">[Default]</div><svg style="position:absolute;left:132px;top:8px" width="7" height="4" viewBox="0 0 7 4"><path d="M0 0H7L3.5 4Z" fill="#000"/></svg></div>
<div class="cb" style="left:968px;top:642px;width:146px;height:22px"><div class="t" style="left:3px;top:4px">[Default]</div><svg style="position:absolute;left:132px;top:8px" width="7" height="4" viewBox="0 0 7 4"><path d="M0 0H7L3.5 4Z" fill="#000"/></svg></div>
<div class="cb" style="left:1118px;top:642px;width:146px;height:22px"><div class="t" style="left:3px;top:4px">[Default]</div><svg style="position:absolute;left:132px;top:8px" width="7" height="4" viewBox="0 0 7 4"><path d="M0 0H7L3.5 4Z" fill="#000"/></svg></div>
<div class="pb" style="left:1268px;top:642px;width:22px;height:22px"><svg width="22" height="22" viewBox="0 0 22 22" style="position:absolute;left:-1px;top:-1px">
<g transform="translate(-0.3 0.2) rotate(-45 11 11)">
<path d="M1.8 10.0 L5.6 8.4 L19.6 8.4 L19.6 13.6 L5.6 13.6 L1.8 12.0 Z" fill="#000"/>
<path d="M3.2 10.5 L6.2 9.4 L6.2 12.6 L3.2 11.5 Z" fill="#8c8c00"/>
<rect x="6.2" y="9.4" width="8.4" height="1.4" fill="#ffff00"/>
<rect x="6.2" y="10.8" width="8.4" height="0.7" fill="#b8b8c8"/>
<rect x="6.2" y="11.5" width="8.4" height="1.1" fill="#8c8c00"/>
<rect x="14.6" y="9.4" width="1.8" height="3.2" fill="#8c8c00"/>
<rect x="16.4" y="9.4" width="2.4" height="3.2" fill="#ff0000"/>
</g></svg></div>
<div class="t" style="left:548px;top:670px;">Resurs:</div>
<div class="cb" style="left:668px;top:668px;width:146px;height:22px"><div class="t" style="left:3px;top:4px">[Default]</div><svg style="position:absolute;left:132px;top:8px" width="7" height="4" viewBox="0 0 7 4"><path d="M0 0H7L3.5 4Z" fill="#000"/></svg></div>
<div class="cb" style="left:818px;top:668px;width:146px;height:22px"><div class="t" style="left:3px;top:4px">[Default]</div><svg style="position:absolute;left:132px;top:8px" width="7" height="4" viewBox="0 0 7 4"><path d="M0 0H7L3.5 4Z" fill="#000"/></svg></div>
<div class="cb" style="left:968px;top:668px;width:146px;height:22px"><div class="t" style="left:3px;top:4px">[Default]</div><svg style="position:absolute;left:132px;top:8px" width="7" height="4" viewBox="0 0 7 4"><path d="M0 0H7L3.5 4Z" fill="#000"/></svg></div>
<div class="cb" style="left:1118px;top:668px;width:146px;height:22px"><div class="t" style="left:3px;top:4px">[Default]</div><svg style="position:absolute;left:132px;top:8px" width="7" height="4" viewBox="0 0 7 4"><path d="M0 0H7L3.5 4Z" fill="#000"/></svg></div>
<div class="pb" style="left:1268px;top:668px;width:22px;height:22px"><svg width="22" height="22" viewBox="0 0 22 22" style="position:absolute;left:-1px;top:-1px">
<g transform="translate(-0.3 0.2) rotate(-45 11 11)">
<path d="M1.8 10.0 L5.6 8.4 L19.6 8.4 L19.6 13.6 L5.6 13.6 L1.8 12.0 Z" fill="#000"/>
<path d="M3.2 10.5 L6.2 9.4 L6.2 12.6 L3.2 11.5 Z" fill="#8c8c00"/>
<rect x="6.2" y="9.4" width="8.4" height="1.4" fill="#ffff00"/>
<rect x="6.2" y="10.8" width="8.4" height="0.7" fill="#b8b8c8"/>
<rect x="6.2" y="11.5" width="8.4" height="1.1" fill="#8c8c00"/>
<rect x="14.6" y="9.4" width="1.8" height="3.2" fill="#8c8c00"/>
<rect x="16.4" y="9.4" width="2.4" height="3.2" fill="#ff0000"/>
</g></svg></div>
<div class="t" style="left:548px;top:696px;">Division:</div>
<div class="cb" style="left:668px;top:694px;width:146px;height:22px"><div class="t" style="left:3px;top:4px">[Default]</div><svg style="position:absolute;left:132px;top:8px" width="7" height="4" viewBox="0 0 7 4"><path d="M0 0H7L3.5 4Z" fill="#000"/></svg></div>
<div class="cb" style="left:818px;top:694px;width:146px;height:22px"><div class="t" style="left:3px;top:4px">[Default]</div><svg style="position:absolute;left:132px;top:8px" width="7" height="4" viewBox="0 0 7 4"><path d="M0 0H7L3.5 4Z" fill="#000"/></svg></div>
<div class="cb" style="left:968px;top:694px;width:146px;height:22px"><div class="t" style="left:3px;top:4px">[Default]</div><svg style="position:absolute;left:132px;top:8px" width="7" height="4" viewBox="0 0 7 4"><path d="M0 0H7L3.5 4Z" fill="#000"/></svg></div>
<div class="cb" style="left:1118px;top:694px;width:146px;height:22px"><div class="t" style="left:3px;top:4px">[Default]</div><svg style="position:absolute;left:132px;top:8px" width="7" height="4" viewBox="0 0 7 4"><path d="M0 0H7L3.5 4Z" fill="#000"/></svg></div>
<div class="pb" style="left:1268px;top:694px;width:22px;height:22px"><svg width="22" height="22" viewBox="0 0 22 22" style="position:absolute;left:-1px;top:-1px">
<g transform="translate(-0.3 0.2) rotate(-45 11 11)">
<path d="M1.8 10.0 L5.6 8.4 L19.6 8.4 L19.6 13.6 L5.6 13.6 L1.8 12.0 Z" fill="#000"/>
<path d="M3.2 10.5 L6.2 9.4 L6.2 12.6 L3.2 11.5 Z" fill="#8c8c00"/>
<rect x="6.2" y="9.4" width="8.4" height="1.4" fill="#ffff00"/>
<rect x="6.2" y="10.8" width="8.4" height="0.7" fill="#b8b8c8"/>
<rect x="6.2" y="11.5" width="8.4" height="1.1" fill="#8c8c00"/>
<rect x="14.6" y="9.4" width="1.8" height="3.2" fill="#8c8c00"/>
<rect x="16.4" y="9.4" width="2.4" height="3.2" fill="#ff0000"/>
</g></svg></div>
<div class="t" style="left:548px;top:722px;">Avdeling:</div>
<div class="cb" style="left:668px;top:720px;width:146px;height:22px"><div class="t" style="left:3px;top:4px">[Default]</div><svg style="position:absolute;left:132px;top:8px" width="7" height="4" viewBox="0 0 7 4"><path d="M0 0H7L3.5 4Z" fill="#000"/></svg></div>
<div class="cb" style="left:818px;top:720px;width:146px;height:22px"><div class="t" style="left:3px;top:4px">[Default]</div><svg style="position:absolute;left:132px;top:8px" width="7" height="4" viewBox="0 0 7 4"><path d="M0 0H7L3.5 4Z" fill="#000"/></svg></div>
<div class="cb" style="left:968px;top:720px;width:146px;height:22px"><div class="t" style="left:3px;top:4px">[Default]</div><svg style="position:absolute;left:132px;top:8px" width="7" height="4" viewBox="0 0 7 4"><path d="M0 0H7L3.5 4Z" fill="#000"/></svg></div>
<div class="cb" style="left:1118px;top:720px;width:146px;height:22px"><div class="t" style="left:3px;top:4px">[Default]</div><svg style="position:absolute;left:132px;top:8px" width="7" height="4" viewBox="0 0 7 4"><path d="M0 0H7L3.5 4Z" fill="#000"/></svg></div>
<div class="pb" style="left:1268px;top:720px;width:22px;height:22px"><svg width="22" height="22" viewBox="0 0 22 22" style="position:absolute;left:-1px;top:-1px">
<g transform="translate(-0.3 0.2) rotate(-45 11 11)">
<path d="M1.8 10.0 L5.6 8.4 L19.6 8.4 L19.6 13.6 L5.6 13.6 L1.8 12.0 Z" fill="#000"/>
<path d="M3.2 10.5 L6.2 9.4 L6.2 12.6 L3.2 11.5 Z" fill="#8c8c00"/>
<rect x="6.2" y="9.4" width="8.4" height="1.4" fill="#ffff00"/>
<rect x="6.2" y="10.8" width="8.4" height="0.7" fill="#b8b8c8"/>
<rect x="6.2" y="11.5" width="8.4" height="1.1" fill="#8c8c00"/>
<rect x="14.6" y="9.4" width="1.8" height="3.2" fill="#8c8c00"/>
<rect x="16.4" y="9.4" width="2.4" height="3.2" fill="#ff0000"/>
</g></svg></div>
<div class="t" style="left:548px;top:748px;">Projekt:</div>
<div class="cb" style="left:668px;top:746px;width:146px;height:22px"><div class="t" style="left:3px;top:4px">[Default]</div><svg style="position:absolute;left:132px;top:8px" width="7" height="4" viewBox="0 0 7 4"><path d="M0 0H7L3.5 4Z" fill="#000"/></svg></div>
<div class="cb" style="left:818px;top:746px;width:146px;height:22px"><div class="t" style="left:3px;top:4px">[Default]</div><svg style="position:absolute;left:132px;top:8px" width="7" height="4" viewBox="0 0 7 4"><path d="M0 0H7L3.5 4Z" fill="#000"/></svg></div>
<div class="cb" style="left:968px;top:746px;width:146px;height:22px"><div class="t" style="left:3px;top:4px">[Default]</div><svg style="position:absolute;left:132px;top:8px" width="7" height="4" viewBox="0 0 7 4"><path d="M0 0H7L3.5 4Z" fill="#000"/></svg></div>
<div class="cb" style="left:1118px;top:746px;width:146px;height:22px"><div class="t" style="left:3px;top:4px">[Default]</div><svg style="position:absolute;left:132px;top:8px" width="7" height="4" viewBox="0 0 7 4"><path d="M0 0H7L3.5 4Z" fill="#000"/></svg></div>
<div class="pb" style="left:1268px;top:746px;width:22px;height:22px"><svg width="22" height="22" viewBox="0 0 22 22" style="position:absolute;left:-1px;top:-1px">
<g transform="translate(-0.3 0.2) rotate(-45 11 11)">
<path d="M1.8 10.0 L5.6 8.4 L19.6 8.4 L19.6 13.6 L5.6 13.6 L1.8 12.0 Z" fill="#000"/>
<path d="M3.2 10.5 L6.2 9.4 L6.2 12.6 L3.2 11.5 Z" fill="#8c8c00"/>
<rect x="6.2" y="9.4" width="8.4" height="1.4" fill="#ffff00"/>
<rect x="6.2" y="10.8" width="8.4" height="0.7" fill="#b8b8c8"/>
<rect x="6.2" y="11.5" width="8.4" height="1.1" fill="#8c8c00"/>
<rect x="14.6" y="9.4" width="1.8" height="3.2" fill="#8c8c00"/>
<rect x="16.4" y="9.4" width="2.4" height="3.2" fill="#ff0000"/>
</g></svg></div>
</div>
<div style="left:962px;top:506px;width:339px;height:272px;border:4px solid #f4511e"></div>
</body></html>
